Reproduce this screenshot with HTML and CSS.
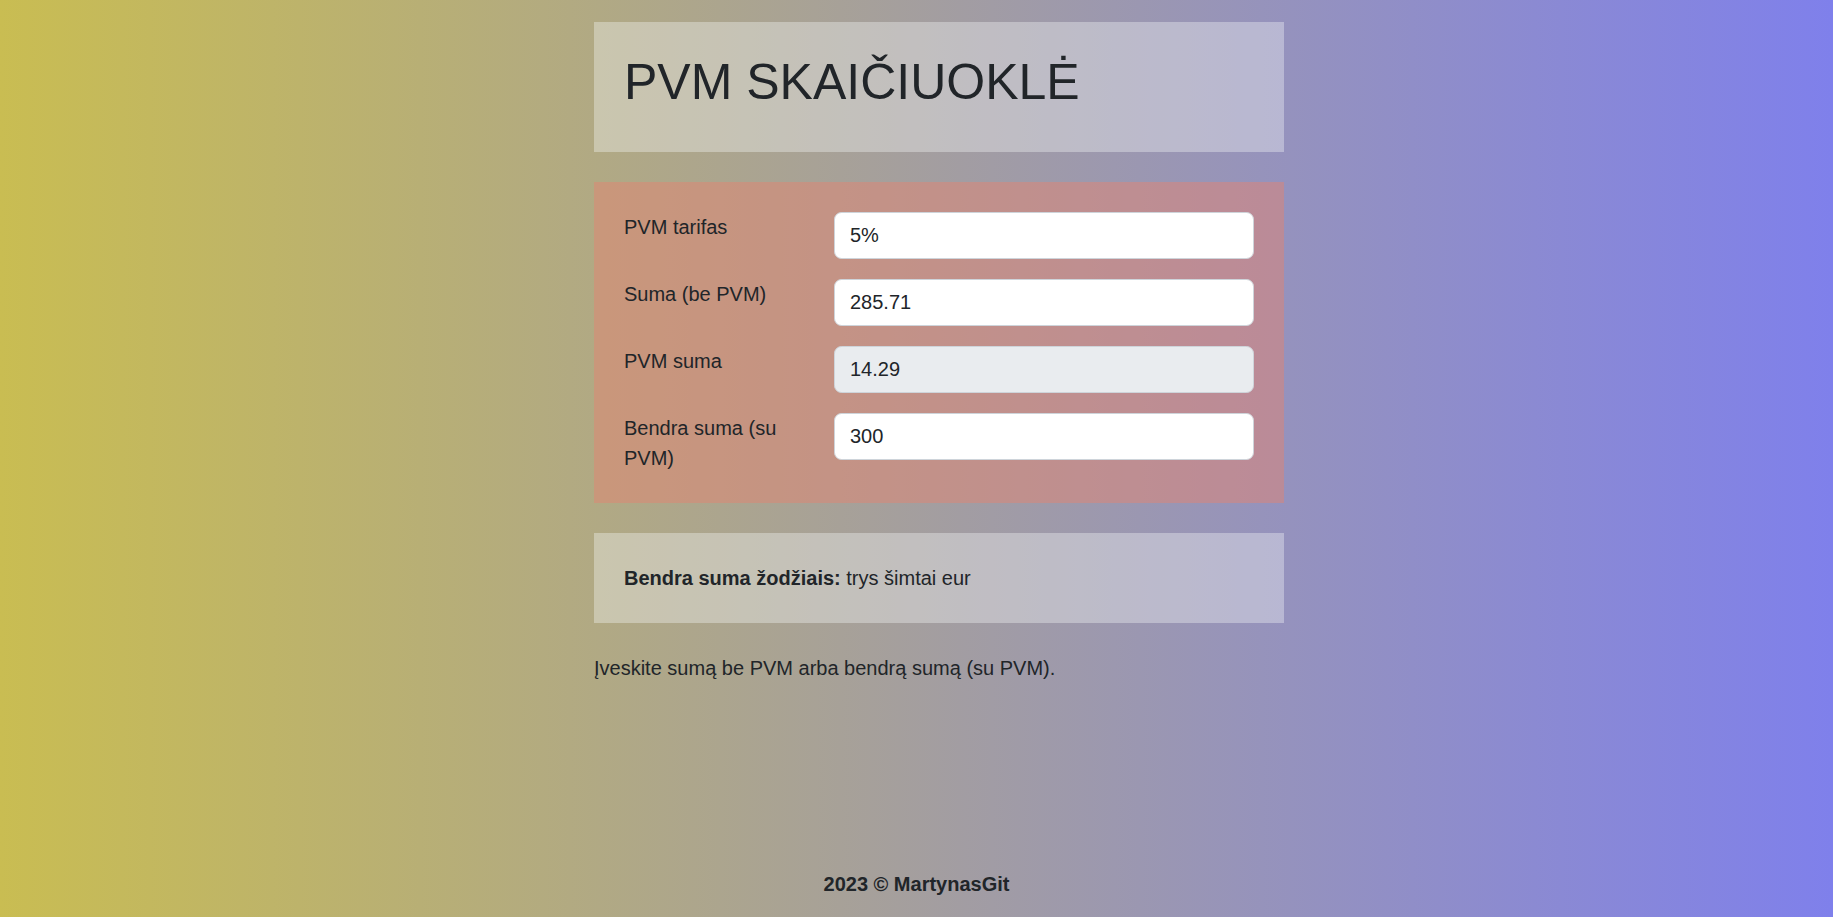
FILE: index.html
```html
<!DOCTYPE html>
<html lang="lt">
<head>
<meta charset="utf-8">
<title>PVM skaičiuoklė</title>
<link rel="stylesheet" href="styles.css">
</head>
<body>
<main class="page">
  <header class="card card-light">
    <h1 class="title">PVM SKAIČIUOKLĖ</h1>
  </header>
  <section class="card card-form">
    <div class="row">
      <label class="label" for="rate">PVM tarifas</label>
      <input class="field" id="rate" type="text" value="5%">
    </div>
    <div class="row">
      <label class="label" for="net">Suma (be PVM)</label>
      <input class="field" id="net" type="text" value="285.71">
    </div>
    <div class="row">
      <label class="label" for="vat">PVM suma</label>
      <input class="field" id="vat" type="text" value="14.29" disabled>
    </div>
    <div class="row">
      <label class="label" for="gross">Bendra suma (su PVM)</label>
      <input class="field" id="gross" type="text" value="300">
    </div>
  </section>
  <section class="card card-light">
    <p class="words"><strong>Bendra suma žodžiais:</strong> trys šimtai eur</p>
  </section>
  <p class="hint">Įveskite sumą be PVM arba bendrą sumą (su PVM).</p>
</main>
<footer class="footer">2023 © MartynasGit</footer>
</body>
</html>
```

FILE: styles.css
```css
* { box-sizing: border-box; }
html, body { height: 100%; }
body {
  margin: 0;
  min-height: 100vh;
  display: flex;
  flex-direction: column;
  font-family: "Liberation Sans", Arial, sans-serif;
  font-size: 20px;
  line-height: 1.5;
  color: #212529;
  background: linear-gradient(to right, #c9bd52, #7f80eb);
}
.page {
  width: 690px;
  margin: 22px 0 0 calc(50% - 322.5px);
  display: flex;
  flex-direction: column;
  gap: 30px;
}
.card { padding: 30px; }
.card-light { background: rgba(248, 249, 250, 0.36); }
.card-form {
  background: rgba(228, 131, 112, 0.48);
  display: flex;
  flex-direction: column;
  gap: 20px;
}
.title {
  margin: 0 0 10px;
  font-size: 50px;
  font-weight: 400;
  line-height: 1.2;
}
.row { display: flex; align-items: flex-start; }
.label { width: 210px; flex: none; padding-right: 20px; }
.field {
  flex: 1;
  min-width: 0;
  height: 47px;
  padding: 7.5px 15px;
  border: 1px solid #ced4da;
  border-radius: 7.5px;
  background: #fff;
  font: inherit;
  color: #212529;
}
.field:disabled { background: #e9ecef; color: #212529; opacity: 1; -webkit-text-fill-color: #212529; }
.words { margin: 0; }
.hint { margin: 0; }
.footer {
  margin-top: auto;
  text-align: center;
  font-weight: 700;
  padding-bottom: 18px;
}
```
